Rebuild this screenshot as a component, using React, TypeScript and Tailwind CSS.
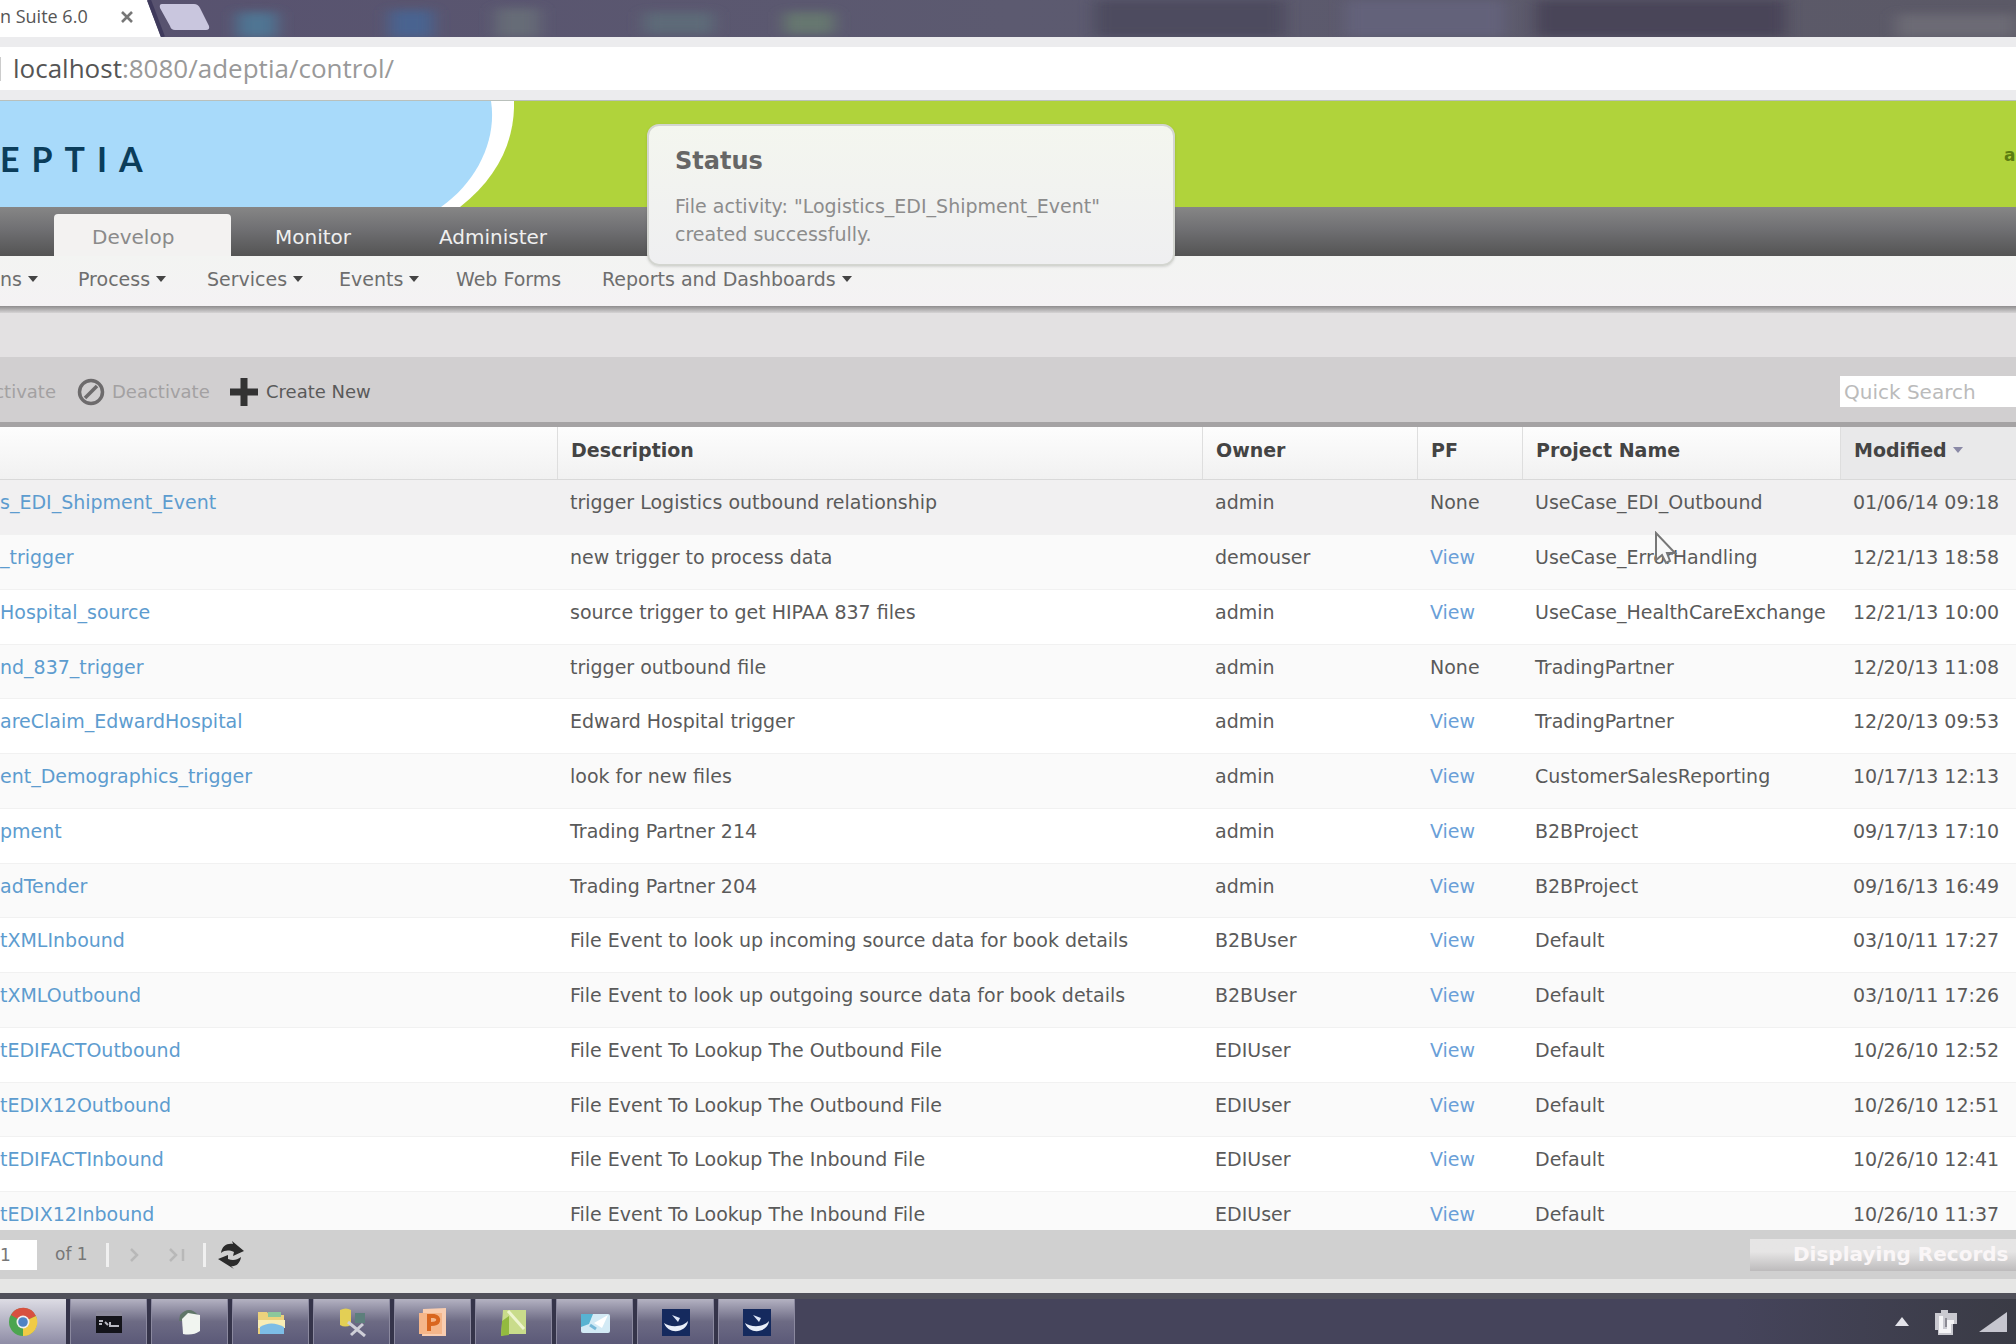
import type { ReactNode } from "react";

type Row = {
  name: string;
  description: string;
  owner: string;
  pf: "None" | "View";
  project: string;
  modified: string;
};

const rows: Row[] = [
  { name: "s_EDI_Shipment_Event", description: "trigger Logistics outbound relationship", owner: "admin", pf: "None", project: "UseCase_EDI_Outbound", modified: "01/06/14 09:18" },
  { name: "_trigger", description: "new trigger to process data", owner: "demouser", pf: "View", project: "UseCase_ErrorHandling", modified: "12/21/13 18:58" },
  { name: "Hospital_source", description: "source trigger to get HIPAA 837 files", owner: "admin", pf: "View", project: "UseCase_HealthCareExchange", modified: "12/21/13 10:00" },
  { name: "nd_837_trigger", description: "trigger outbound file", owner: "admin", pf: "None", project: "TradingPartner", modified: "12/20/13 11:08" },
  { name: "areClaim_EdwardHospital", description: "Edward Hospital trigger", owner: "admin", pf: "View", project: "TradingPartner", modified: "12/20/13 09:53" },
  { name: "ent_Demographics_trigger", description: "look for new files", owner: "admin", pf: "View", project: "CustomerSalesReporting", modified: "10/17/13 12:13" },
  { name: "pment", description: "Trading Partner 214", owner: "admin", pf: "View", project: "B2BProject", modified: "09/17/13 17:10" },
  { name: "adTender", description: "Trading Partner 204", owner: "admin", pf: "View", project: "B2BProject", modified: "09/16/13 16:49" },
  { name: "tXMLInbound", description: "File Event to look up incoming source data for book details", owner: "B2BUser", pf: "View", project: "Default", modified: "03/10/11 17:27" },
  { name: "tXMLOutbound", description: "File Event to look up outgoing source data for book details", owner: "B2BUser", pf: "View", project: "Default", modified: "03/10/11 17:26" },
  { name: "tEDIFACTOutbound", description: "File Event To Lookup The Outbound File", owner: "EDIUser", pf: "View", project: "Default", modified: "10/26/10 12:52" },
  { name: "tEDIX12Outbound", description: "File Event To Lookup The Outbound File", owner: "EDIUser", pf: "View", project: "Default", modified: "10/26/10 12:51" },
  { name: "tEDIFACTInbound", description: "File Event To Lookup The Inbound File", owner: "EDIUser", pf: "View", project: "Default", modified: "10/26/10 12:41" },
  { name: "tEDIX12Inbound", description: "File Event To Lookup The Inbound File", owner: "EDIUser", pf: "View", project: "Default", modified: "10/26/10 11:37" },
];

function Caret() {
  return (
    <svg viewBox="0 0 10 6" className="h-[6px] w-[10px]" aria-hidden="true">
      <path d="M0 0H10L5 6Z" fill="#444" />
    </svg>
  );
}

function BrowserChrome() {
  return (
    <div className="shrink-0 font-['Open_Sans',sans-serif]">
      <div className="flex h-[37px] overflow-hidden bg-gradient-to-r from-[#57516f] via-[#5c5a70] to-[#5b5966]">
        <div className="flex h-full items-center bg-white pb-1 text-[18px] text-[#555]">
          <span className="whitespace-nowrap">n Suite 6.0</span>
          <button type="button" aria-label="Close tab" className="ml-[29px] flex h-5 w-5 items-center justify-center">
            <svg viewBox="0 0 12 12" className="h-3 w-3">
              <path d="M1 1L11 11M11 1L1 11" stroke="#777" strokeWidth="2.6" />
            </svg>
          </button>
        </div>
        <svg viewBox="0 0 76 37" className="h-[37px] w-[76px] shrink-0" aria-hidden="true">
          <path d="M0 0H10L24 37H0Z" fill="#fff" />
          <path d="M12 0L26 37" stroke="#3f3a5c" strokeWidth="4" fill="none" />
          <path d="M25 4H57Q61 4 63 8L72 26Q73 30 69 30H38Q34 30 33 26L23 8Q22 4 25 4Z" fill="#c9c6de" />
        </svg>
        <svg viewBox="0 0 1800 37" preserveAspectRatio="none" className="h-full min-w-0 flex-1" aria-hidden="true">
          <defs>
            <filter id="soft" x="-30%" y="-30%" width="160%" height="160%">
              <feGaussianBlur stdDeviation="8 4" />
            </filter>
          </defs>
          <g filter="url(#soft)">
            <rect x="24" y="12" width="40" height="26" fill="#4f7593" />
            <rect x="176" y="10" width="44" height="28" fill="#4a6490" />
            <rect x="282" y="8" width="44" height="30" fill="#666c77" />
            <rect x="430" y="12" width="70" height="22" fill="#5d6a78" />
            <rect x="570" y="12" width="50" height="22" fill="#66776f" />
            <rect x="880" y="0" width="190" height="37" fill="#4d4b5f" />
            <rect x="1130" y="0" width="160" height="37" fill="#64627a" />
            <rect x="1320" y="0" width="250" height="37" fill="#494559" />
            <rect x="1680" y="14" width="120" height="24" fill="#6c6a74" />
          </g>
        </svg>
      </div>
      <div className="border-b border-[#b9c0bb] bg-[#ececee] py-[10px]">
        <div className="flex h-[43px] items-center bg-white">
          <span className="mr-[12px] h-6 w-px bg-[#ccc]" />
          <span className="whitespace-nowrap text-[26px] text-[#999]">
            <span className="text-[#555]">localhost</span>:8080/adeptia/control/
          </span>
        </div>
      </div>
    </div>
  );
}

function Banner() {
  return (
    <div className="flex h-[106px] shrink-0 items-stretch justify-between overflow-hidden bg-[#b0d33b]">
      <div className="relative w-[514px]">
        <svg viewBox="0 0 514 106" className="block h-[106px] w-[514px]" aria-hidden="true">
          <path d="M0 0H514C515 40 498 76 460 106H0Z" fill="#fff" />
          <path d="M0 0H491C497 38 478 80 441 106H0Z" fill="#a8dafa" />
        </svg>
        <span className="absolute left-0 top-[34px] font-['Lato',sans-serif] text-[34px] font-bold leading-[48px] tracking-[12px] text-[#0b3d5a]">
          EPTIA
        </span>
      </div>
      <a href="#account" className="flex w-3 items-center pt-1 text-[17px] font-bold text-[#5c7d10]">
        a
      </a>
    </div>
  );
}

function MainTabs() {
  return (
    <nav className="flex h-[49px] shrink-0 items-end bg-gradient-to-b from-[#868686] via-[#707073] via-45% to-[#545454] pl-[54px] text-[20px] leading-[36px]">
      <a href="#develop" className="h-[42px] w-[177px] rounded-t bg-[#f3f2f1] pl-[38px] pt-[5px] text-[#8a8a8a]">
        Develop
      </a>
      <a href="#monitor" className="h-[42px] w-[164px] pl-[44px] pt-[5px] text-[#f0f0f0]">
        Monitor
      </a>
      <a href="#administer" className="h-[42px] pl-[44px] pt-[5px] text-[#f0f0f0]">
        Administer
      </a>
    </nav>
  );
}

function MenuItem({ label, caret = true, className }: { label: string; caret?: boolean; className: string }) {
  return (
    <button type="button" className={`flex items-center gap-[6px] whitespace-nowrap text-left ${className}`}>
      {label}
      {caret && <Caret />}
    </button>
  );
}

function SubMenu() {
  return (
    <>
      <div className="flex h-[50px] shrink-0 items-center bg-gradient-to-b from-[#f3f4f2] to-[#f4f2f4] pb-1 text-[19px] text-[#6e6e6e]">
        <MenuItem label="ns" className="w-[78px]" />
        <MenuItem label="Process" className="w-[129px]" />
        <MenuItem label="Services" className="w-[132px]" />
        <MenuItem label="Events" className="w-[117px]" />
        <MenuItem label="Web Forms" caret={false} className="w-[146px]" />
        <MenuItem label="Reports and Dashboards" className="" />
      </div>
      <div className="h-[7px] shrink-0 bg-gradient-to-b from-[#8f8d8e] to-[#d6d4d5]" />
    </>
  );
}

function Toolbar() {
  return (
    <div className="flex h-[65px] shrink-0 items-center justify-between bg-[#d1cfd0] pt-1 text-[18px]">
      <div className="flex items-center">
        <button type="button" className="mr-[21px] flex w-[56px] justify-end overflow-hidden text-[#a3a1a2]">
          ctivate
        </button>
        <button type="button" className="flex w-[152px] items-center gap-[7px] text-[#a3a1a2]">
          <svg viewBox="0 0 28 28" className="h-7 w-7" fill="none" stroke="#6d6b6c" strokeWidth="3.5" aria-hidden="true">
            <circle cx="14" cy="14" r="11.5" />
            <path d="M8 20L20 8" />
          </svg>
          Deactivate
        </button>
        <button type="button" className="flex items-center gap-[7px] text-[#5a5a5a]">
          <svg viewBox="0 0 30 30" className="h-[30px] w-[30px]" stroke="#333" strokeWidth="7" aria-hidden="true">
            <path d="M15 1V29M1 15H29" />
          </svg>
          Create New
        </button>
      </div>
      <input
        type="text"
        aria-label="Quick Search"
        placeholder="Quick Search"
        className="h-[31px] w-[176px] bg-white pl-[4px] text-[20px] text-[#555] outline-none placeholder:text-[#bbb]"
      />
    </div>
  );
}

function HeadCell({ children, className = "" }: { children?: ReactNode; className?: string }) {
  return (
    <th scope="col" className={`border-l border-[#dedede] pb-[6px] pl-[13px] text-left font-bold text-[#444] first:border-l-0 ${className}`}>
      {children}
    </th>
  );
}

function EventsTable() {
  return (
    <div className="min-h-0 flex-1 overflow-hidden border-t-[5px] border-[#a5a3a4] bg-white">
      <table className="w-full table-fixed border-separate border-spacing-0 whitespace-nowrap text-[19px] text-[#5a5a5a]">
        <colgroup>
          <col className="w-[557px]" />
          <col />
          <col className="w-[215px]" />
          <col className="w-[105px]" />
          <col className="w-[318px]" />
          <col className="w-[176px]" />
        </colgroup>
        <thead>
          <tr className="h-[52px] bg-gradient-to-b from-[#fdfdfd] to-[#f1f1f1]">
            <HeadCell />
            <HeadCell>Description</HeadCell>
            <HeadCell>Owner</HeadCell>
            <HeadCell>PF</HeadCell>
            <HeadCell>Project Name</HeadCell>
            <HeadCell className="bg-[#e9e9ea]">
              <span className="flex items-center gap-[6px]">
                Modified
                <svg viewBox="0 0 10 6" className="h-[6px] w-[10px]" aria-hidden="true">
                  <path d="M0 0H10L5 6Z" fill="#8a89a6" />
                </svg>
              </span>
            </HeadCell>
          </tr>
        </thead>
        <tbody>
          {rows.map((row, i) => (
            <tr
              key={row.name}
              className={`h-[55px] nth-[4n]:h-[54px] [&>td]:border-t [&>td]:pb-[9px] [&>td]:pl-[13px] ${
                i === 0 ? "bg-[#f1f0f1] [&>td]:border-[#d9d9d9]" : i % 2 ? "bg-[#fafafa] [&>td]:border-[#f1f1f1]" : "bg-white [&>td]:border-[#f1f1f1]"
              }`}
            >
              <td className="pl-0!">
                <a href="#event" className="text-[#5d9ccf]">
                  {row.name}
                </a>
              </td>
              <td>{row.description}</td>
              <td>{row.owner}</td>
              <td>
                {row.pf === "View" ? (
                  <a href="#view" className="text-[#6a9fd8]">
                    View
                  </a>
                ) : (
                  "None"
                )}
              </td>
              <td>{row.project}</td>
              <td>{row.modified}</td>
            </tr>
          ))}
        </tbody>
      </table>
    </div>
  );
}

function Pager() {
  return (
    <div className="shrink-0 border-b-[14px] border-[#e6e6e5]">
      <div className="flex h-[49px] items-center justify-between bg-[#d0d0d0] text-[17px] text-[#777]">
        <div className="flex items-center">
          <input type="text" aria-label="Page" defaultValue="1" className="h-[30px] w-[37px] bg-white text-[17px] outline-none" />
          <span className="ml-[18px] w-[51px]">of 1</span>
          <span className="h-6 w-[3px] bg-[#f0f0f0]" />
          <button type="button" aria-label="Next page" className="ml-[16px] flex h-6 w-[18px] items-center justify-center">
            <svg viewBox="0 0 10 14" className="h-[14px] w-[10px]" fill="none" stroke="#b8b8b8" strokeWidth="2.5">
              <path d="M2 1L8 7L2 13" />
            </svg>
          </button>
          <button type="button" aria-label="Last page" className="ml-[24px] flex h-6 w-5 items-center justify-center">
            <svg viewBox="0 0 18 14" className="h-[14px] w-[18px]" fill="none" stroke="#b8b8b8" strokeWidth="2.5">
              <path d="M2 1L8 7L2 13M15 1V13" />
            </svg>
          </button>
          <span className="ml-[16px] h-6 w-[3px] bg-[#f0f0f0]" />
          <button type="button" aria-label="Refresh" className="ml-[12px]">
            <svg viewBox="0 0 26 28" className="block h-7 w-[26px]" fill="#2b2b2b">
              <path d="M3 12C4 5 9 2 15 3L14 0L26 10L15 15L16 11C11 9 7 9 3 12Z" />
              <path d="M23 16C22 23 17 26 13 25L16 28L0 18L10 14L10 18C15 20 19 19 23 16Z" />
            </svg>
          </button>
        </div>
        <div className="h-8 w-[266px] overflow-hidden whitespace-nowrap bg-gradient-to-b from-[#e6e5e5] from-40% to-[#bdbbbc] pl-[43px] text-[20px] font-bold leading-[30px] text-[#faf6f7]">
          Displaying Records
        </div>
      </div>
    </div>
  );
}

function MoonIcon() {
  return (
    <svg viewBox="0 0 30 30" className="h-[30px] w-[30px]">
      <rect x="1" y="2" width="28" height="27" fill="#152a5e" />
      <path d="M3 16C8 20 21 21 27 14C26 25 8 29 3 16Z" fill="#e9effa" />
      <path d="M11 8L19 11L17 15Z" fill="#dfe8f8" />
    </svg>
  );
}

const taskIcons: { label: string; icon: ReactNode }[] = [
  {
    label: "Command prompt",
    icon: (
      <svg viewBox="0 0 30 30" className="h-[30px] w-[30px]">
        <rect x="2" y="4" width="26" height="6" fill="#8b899b" />
        <rect x="2" y="9" width="26" height="17" fill="#14141a" />
        <path d="M5 14H9M5 17H8M11 15L14 18M16 15V19H25" stroke="#b9b9c2" strokeWidth="2" fill="none" />
      </svg>
    ),
  },
  {
    label: "Notes",
    icon: (
      <svg viewBox="0 0 30 30" className="h-[30px] w-[30px]">
        <path d="M5 8Q14 -2 23 8L25 14H4Z" fill="#5f7668" />
        <path d="M7 12L13 6L25 8V24Q18 29 8 27Z" fill="#f1f5f0" />
      </svg>
    ),
  },
  {
    label: "Explorer",
    icon: (
      <svg viewBox="0 0 30 30" className="h-[30px] w-[30px]">
        <path d="M2 5H11L13 8H28V27H2Z" fill="#ecd27c" />
        <path d="M12 5H25V10H12Z" fill="#8cc79b" />
        <path d="M2 13H29V21H2Z" fill="#f8edb6" />
        <path d="M4 27V20Q15 13 28 20V27Z" fill="#7dbde6" />
      </svg>
    ),
  },
  {
    label: "Tools",
    icon: (
      <svg viewBox="0 0 30 30" className="h-[30px] w-[30px]">
        <path d="M3 3Q9 0 14 3V18Q8 21 3 18Z" fill="#e3cf55" />
        <path d="M18 6H28V16H18Z" fill="#5d7f7c" />
        <path d="M11 15L28 29M26 17L14 28" stroke="#cfcfd8" strokeWidth="3" />
      </svg>
    ),
  },
  {
    label: "PowerPoint",
    icon: (
      <svg viewBox="0 0 30 30" className="h-[30px] w-[30px]">
        <path d="M5 2L28 1V29L4 29Z" fill="#f9cdb0" />
        <path d="M1 6H24V27H1Z" fill="#f5b68a" />
        <path d="M11 24V9H16Q21 10 20 14Q19 17 13 17" fill="none" stroke="#d9661f" strokeWidth="4" />
      </svg>
    ),
  },
  {
    label: "Notepad++",
    icon: (
      <svg viewBox="0 0 30 30" className="h-[30px] w-[30px]">
        <path d="M4 3H27V27H8L2 29Z" fill="#c9dc8b" />
        <path d="M3 14L10 9V28L2 29Z" fill="#93ba3f" />
        <path d="M9 4L25 22" stroke="#eef5cf" strokeWidth="3" />
      </svg>
    ),
  },
  {
    label: "Mail",
    icon: (
      <svg viewBox="0 0 30 30" className="h-[30px] w-[30px]">
        <rect x="1" y="7" width="29" height="19" rx="2" fill="#d3eaf5" />
        <path d="M1 7H13L9 17L1 20Z" fill="#58b3d2" />
        <path d="M14 16L28 8L22 21Z" fill="#fff" />
        <path d="M10 18L16 22" stroke="#77b8d8" strokeWidth="3" />
      </svg>
    ),
  },
  { label: "Moon window one", icon: <MoonIcon /> },
  { label: "Moon window two", icon: <MoonIcon /> },
];

function Taskbar() {
  return (
    <footer className="flex h-[51px] shrink-0 items-stretch justify-between border-t-[6px] border-[#50505a] bg-[#45445b]">
      <div className="flex gap-1 bg-[#35344a]">
        <button type="button" aria-label="Chrome" className="flex w-[66px] justify-start bg-gradient-to-b from-[#dddce4] to-[#8f8da6] pl-2 pt-2">
          <svg viewBox="0 0 30 30" className="h-[30px] w-[30px]">
            <circle cx="15" cy="15" r="14" fill="#4ca54f" />
            <path d="M15 15L3 8A14 14 0 0 1 28 9Z" fill="#d8503f" />
            <path d="M15 15L28 9A14 14 0 0 1 15 29Z" fill="#f0cb45" />
            <circle cx="15" cy="15" r="6.5" fill="#f1f1f1" />
            <circle cx="15" cy="15" r="4.8" fill="#4f83c4" />
          </svg>
        </button>
        {taskIcons.map((t) => (
          <button
            key={t.label}
            type="button"
            aria-label={t.label}
            className="flex w-[77px] justify-center border-x border-[#8b899f] bg-gradient-to-b from-[#b4b2c2] via-[#6d6b84] to-[#5b5978] pt-2"
          >
            {t.icon}
          </button>
        ))}
      </div>
      <div className="flex items-center gap-5 bg-gradient-to-r from-transparent to-[#3a3b45] pl-40 pr-[9px]">
        <svg viewBox="0 0 14 9" className="mr-1 h-[9px] w-[14px]" aria-label="Show hidden icons">
          <path d="M7 0L14 9H0Z" fill="#e3e3ea" />
        </svg>
        <svg viewBox="0 0 26 28" className="h-7 w-[26px]" aria-label="Power">
          <path d="M2 5H8V2H15V5H24V16H20V27H5V22H2Z" fill="#c9c9d0" />
          <path d="M8 8V23H16V14H21" fill="none" stroke="#f4f4f6" strokeWidth="4" />
          <path d="M13 10V19" stroke="#8b8a93" strokeWidth="2" />
        </svg>
        <svg viewBox="0 0 28 22" className="h-[22px] w-7" aria-label="Network">
          <path d="M0 21L28 1V21Z" fill="#c6c6cf" />
        </svg>
      </div>
    </footer>
  );
}

function StatusToast() {
  return (
    <div
      role="status"
      className="absolute left-[647px] top-[124px] w-[528px] rounded-xl border-2 border-[#d3d5d0] bg-gradient-to-b from-[#f4f6ef] to-[#efeff1] px-[26px] pb-4 pt-[17px] text-[19px] leading-7 text-[#8c8c8c] shadow"
    >
      <h2 className="mb-[13px] text-[24px] font-bold leading-9 text-[#666]">Status</h2>
      <p>File activity: &quot;Logistics_EDI_Shipment_Event&quot;</p>
      <p>created successfully.</p>
    </div>
  );
}

export default function App() {
  return (
    <div className="relative flex h-screen flex-col overflow-hidden bg-[#e3e1e2] font-['DejaVu_Sans',sans-serif]">
      <BrowserChrome />
      <Banner />
      <MainTabs />
      <SubMenu />
      <div className="h-[44px] shrink-0" />
      <Toolbar />
      <EventsTable />
      <Pager />
      <Taskbar />
      <StatusToast />
      <svg viewBox="0 0 24 34" className="absolute left-[1654px] top-[531px] h-[34px] w-6" aria-hidden="true">
        <path d="M2 2V29L8 24L12 32L16 30L13 22H21Z" fill="#f8f8f8" stroke="#777" strokeWidth="2" />
      </svg>
    </div>
  );
}
